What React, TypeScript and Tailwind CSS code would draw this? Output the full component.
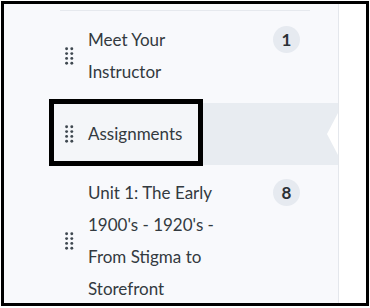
import React from 'react';

function Grip() {
  return (
    <svg width="9" height="18" viewBox="0 0 9 18" className="shrink-0">
      {[1.5, 6.3, 11.1, 15.9].map((y) => (
        <g key={y} fill="#3f4850">
          <circle cx="1.6" cy={y + 0.3} r="1.45" />
          <circle cx="6.8" cy={y + 0.3} r="1.45" />
        </g>
      ))}
    </svg>
  );
}

function Badge({ n }: { n: number }) {
  return (
    <span className="flex h-[27px] w-[27px] items-center justify-center rounded-full bg-[#e6eaf0] text-[17px] font-bold leading-none text-[#2b3035]">
      {n}
    </span>
  );
}

export default function App() {
  return (
    <div className="h-[308px] w-[370px] bg-white p-px" style={{ fontFamily: 'Lato, "Noto Sans", sans-serif' }}>
      <div className="flex h-[305px] w-[368px] overflow-hidden border-[3px] border-black">
        <div className="relative w-[335px] shrink-0 border-r border-[#e4e7ec] bg-[#f8f9fc] text-[17px] leading-[32px] text-[#333a40]">
          <div className="ml-[56px] mt-[6px] h-px w-[250px] bg-[#e6e9ee]" />

          {/* Meet Your Instructor */}
          <div className="mt-[13px] flex">
            <div className="flex w-[84px] items-center pl-[61px]">
              <Grip />
            </div>
            <div className="w-[150px]">Meet Your Instructor</div>
            <div className="ml-[35px] pt-[2px]">
              <Badge n={1} />
            </div>
          </div>

          {/* Assignments (active) */}
          <div className="relative ml-[46px] mt-[15px] flex h-[62px] items-center bg-[#e8ecf1]">
            <div className="absolute -left-[1px] -top-[4px] h-[67px] w-[154px] border-[5px] border-black bg-[#f4f6f9]" />
            <div className="relative flex w-[38px] items-center pl-[15px]">
              <Grip />
            </div>
            <div className="relative">Assignments</div>
            <div className="absolute right-0 top-[10px] h-0 w-0 border-y-[21px] border-r-[11px] border-y-transparent border-r-white" />
          </div>

          {/* Unit 1 */}
          <div className="mt-[12px] flex">
            <div className="flex w-[84px] items-center pl-[61px]">
              <Grip />
            </div>
            <div className="w-[150px]">Unit 1: The Early 1900's - 1920's - From Stigma to Storefront</div>
            <div className="ml-[35px] pt-[2px]">
              <Badge n={8} />
            </div>
          </div>
        </div>
        <div className="flex-1 bg-white" />
      </div>
    </div>
  );
}
